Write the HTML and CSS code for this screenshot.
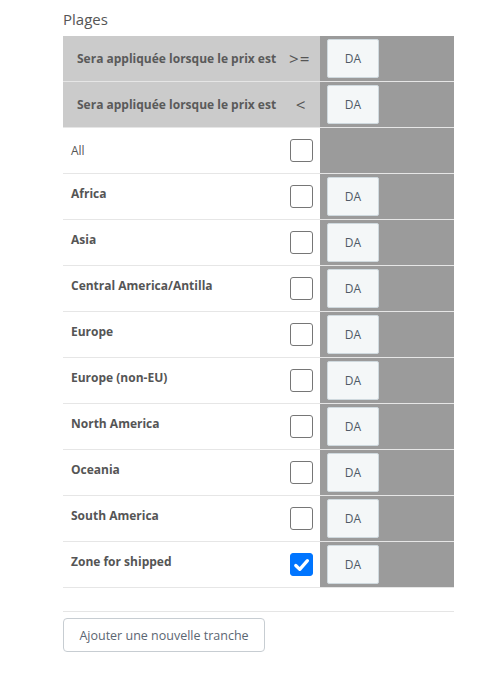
FILE: index.html
```html
<!DOCTYPE html>
<html lang="fr">
<head>
<meta charset="utf-8">
<link rel="stylesheet" href="styles.css">
</head>
<body>
<div class="panel">
  <h3 class="title">Plages</h3>
  <div class="table">
    <div class="row head">
      <div class="cell-label"><span class="head-text">Sera appliquée lorsque le prix est</span><span class="op">&gt;=</span></div>
      <div class="cell-val"><div class="da">DA</div></div>
    </div>
    <div class="row head">
      <div class="cell-label"><span class="head-text">Sera appliquée lorsque le prix est</span><span class="op op-lt">&lt;</span></div>
      <div class="cell-val"><div class="da">DA</div></div>
    </div>
    <div class="row">
      <div class="cell-label"><span class="plain">All</span><span class="cb"></span></div>
      <div class="cell-val"></div>
    </div>
    <div class="row">
      <div class="cell-label"><span class="lbl">Africa</span><span class="cb"></span></div>
      <div class="cell-val"><div class="da">DA</div></div>
    </div>
    <div class="row">
      <div class="cell-label"><span class="lbl">Asia</span><span class="cb"></span></div>
      <div class="cell-val"><div class="da">DA</div></div>
    </div>
    <div class="row">
      <div class="cell-label"><span class="lbl">Central America/Antilla</span><span class="cb"></span></div>
      <div class="cell-val"><div class="da">DA</div></div>
    </div>
    <div class="row">
      <div class="cell-label"><span class="lbl">Europe</span><span class="cb"></span></div>
      <div class="cell-val"><div class="da">DA</div></div>
    </div>
    <div class="row">
      <div class="cell-label"><span class="lbl">Europe (non-EU)</span><span class="cb"></span></div>
      <div class="cell-val"><div class="da">DA</div></div>
    </div>
    <div class="row">
      <div class="cell-label"><span class="lbl">North America</span><span class="cb"></span></div>
      <div class="cell-val"><div class="da">DA</div></div>
    </div>
    <div class="row">
      <div class="cell-label"><span class="lbl">Oceania</span><span class="cb"></span></div>
      <div class="cell-val"><div class="da">DA</div></div>
    </div>
    <div class="row">
      <div class="cell-label"><span class="lbl">South America</span><span class="cb"></span></div>
      <div class="cell-val"><div class="da">DA</div></div>
    </div>
    <div class="row">
      <div class="cell-label"><span class="lbl">Zone for shipped</span><span class="cb checked"><svg viewBox="0 0 22 22" width="22" height="22"><path d="M5 11.5 L9.2 15.6 L17.2 6.4" fill="none" stroke="#fff" stroke-width="3.4" stroke-linecap="round" stroke-linejoin="round"/></svg></span></div>
      <div class="cell-val"><div class="da">DA</div></div>
    </div>
  </div>
  <div class="sep"></div>
  <button class="btn" type="button">Ajouter une nouvelle tranche</button>
</div>
</body>
</html>
```
FILE: styles.css
```css
* { box-sizing: border-box; }
body {
  margin: 0;
  background: #fff;
  font-family: "Open Sans", "Noto Sans", sans-serif;
  color: #555;
}
.panel {
  width: 391px;
  margin-left: 63px;
  padding-top: 8px;
}
.title {
  margin: 0;
  font-size: 15px;
  font-weight: 400;
  line-height: 22px;
  color: #555;
  height: 28px;
}
.table {
  display: flex;
  flex-direction: column;
}
.row {
  display: grid;
  grid-template-columns: 257px 134px;
  height: 46px;
  border-bottom: 1px solid #e6e6e6;
}
.cell-label {
  display: flex;
  align-items: center;
  justify-content: space-between;
  padding: 0 7px 0 8px;
}
.head .cell-label {
  background: #cbcbcb;
  padding-left: 14px;
}
.cell-val {
  background: #9b9b9b;
  padding: 3px 0 3px 7px;
}
.head-text {
  font-size: 12px;
  font-weight: 700;
  color: #5a5a5a;
}
.op {
  font-size: 17px;
  color: #555;
  width: 24px;
  text-align: left;
  letter-spacing: 1px;
}
.op-lt { text-align: center; }
.plain {
  font-size: 12px;
  color: #555;
}
.lbl {
  font-size: 12px;
  font-weight: 700;
  color: #555;
  margin-bottom: 7px;
}
.cb {
  width: 23px;
  height: 23px;
  border: 1px solid #767676;
  border-radius: 3px;
  background: #fff;
  display: flex;
  align-items: center;
  justify-content: center;
}
.cb.checked {
  background: #0075ff;
  border-color: #0075ff;
}
.cb svg { display: block; }
.da {
  width: 52px;
  height: 39px;
  background: #f4f7f8;
  border: 1px solid #cfd9de;
  border-radius: 2px;
  display: flex;
  align-items: center;
  justify-content: center;
  font-size: 12px;
  color: #505a66;
}
.sep {
  margin-top: 23px;
  border-top: 1px solid #e5e5e5;
}
.btn {
  margin-top: 6px;
  width: 202px;
  height: 34px;
  background: #fff;
  border: 1px solid #c7cdd2;
  border-radius: 4px;
  font-family: "Open Sans", "Noto Sans", sans-serif;
  font-size: 12.5px;
  color: #5b6672;
  padding: 0;
}
```
